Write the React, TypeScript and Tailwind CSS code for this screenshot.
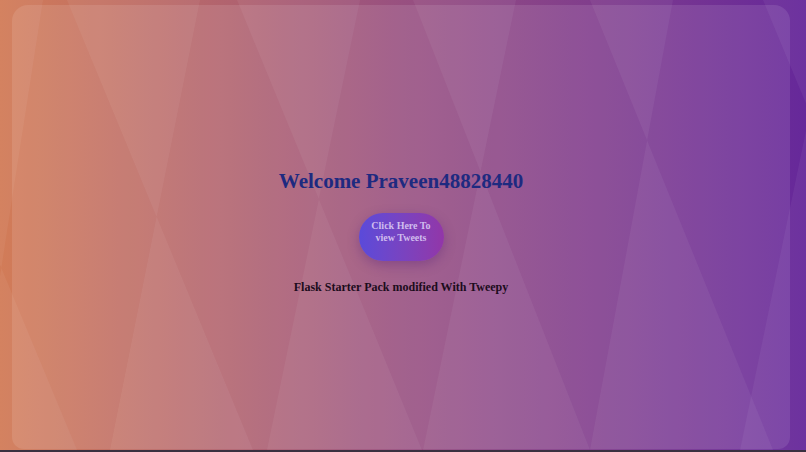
import React from "react";

const bowties: [number, number, number, number][] = [
  [-110, 77, 43, -27],
  [67, 253, 200, 110],
  [237, 422, 360, 267],
  [413, 590, 516, 423],
  [590, 773, 673, 590],
  [763, 950, 833, 740],
];

function Backdrop() {
  return (
    <svg
      className="absolute inset-0 h-full w-full"
      viewBox="0 0 806 450"
      preserveAspectRatio="none"
    >
      <defs>
        <linearGradient id="bg" x1="0" y1="0" x2="1" y2="0">
          <stop offset="0" stopColor="#d27c58" />
          <stop offset="0.5" stopColor="#985080" />
          <stop offset="1" stopColor="#66289a" />
        </linearGradient>
      </defs>
      <rect x="0" y="0" width="806" height="450" fill="url(#bg)" />
      {bowties.map(([lt, lb, mt, mb], i) => (
        <polygon
          key={i}
          points={`${lt},0 ${mt},0 ${mb},450 ${lb},450`}
          fill="#ffffff"
          fillOpacity={0.05}
          fillRule="nonzero"
        />
      ))}
    </svg>
  );
}

export default function App() {
  return (
    <div className="w-[806px] h-[452px] overflow-hidden flex flex-col" style={{ fontFamily: '"Liberation Serif", "Times New Roman", serif' }}>
      <div className="relative h-[450px] w-full">
        <Backdrop />
        <div className="relative flex h-full pl-[12px] pr-[16px] pt-[5px]">
          <div className="flex flex-1 flex-col items-center rounded-t-[16px] rounded-b-[12px] bg-white/10 pt-[164px] mb-[1px]">
            <h2 className="text-[21px] leading-[24px] font-bold text-[#1e2a80]">
              Welcome Praveen48828440
            </h2>
            <button className="mt-[20px] flex h-[48px] w-[85px] flex-col items-center rounded-full bg-gradient-to-r from-[#5a4ada] to-[#9236a8] pt-[7px] text-[10px] font-bold leading-[12px] text-[#d0bcee] shadow-[0_4px_12px_rgba(80,30,120,0.35)]">
              <span>Click Here To</span>
              <span>view Tweets</span>
            </button>
            <p className="mt-[19px] text-[12px] leading-[14px] font-bold text-[#1c0c1c]">
              Flask Starter Pack modified With Tweepy
            </p>
          </div>
        </div>
      </div>
      <div className="h-[2px] w-full bg-[#3a3040]" />
    </div>
  );
}
